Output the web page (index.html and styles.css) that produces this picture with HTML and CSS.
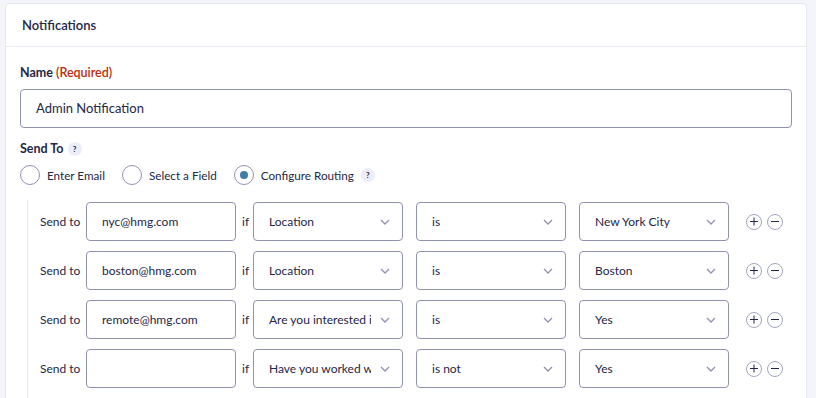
FILE: index.html
```html
<!DOCTYPE html>
<html lang="en">
<head>
    <meta charset="UTF-8">
    <title>Notifications</title>
    <link rel="stylesheet" href="styles.css">
</head>
<body>
    <main class="panel">
        <header class="panel-head">Notifications</header>
        <section class="panel-body">
            <label class="field-label">Name <span class="required">(Required)</span></label>
            <div class="text-box wide">Admin Notification</div>

            <div class="field-label send-label">Send To<span class="help">?</span></div>
            <div class="radios">
                <span class="radio"></span><span class="radio-text">Enter Email</span>
                <span class="radio"></span><span class="radio-text">Select a Field</span>
                <span class="radio checked"></span><span class="radio-text">Configure Routing</span>
                <span class="help">?</span>
            </div>

            <div class="routing">
                <div class="route">
                    <span class="route-label">Send to</span>
                    <div class="text-box email">nyc@hmg.com</div>
                    <span class="route-if">if</span>
                    <div class="select"><span>Location</span></div>
                    <div class="select"><span>is</span></div>
                    <div class="select"><span>New York City</span></div>
                    <span class="route-btns"><span class="btn-add"></span><span class="btn-del"></span></span>
                </div>
                <div class="route">
                    <span class="route-label">Send to</span>
                    <div class="text-box email">boston@hmg.com</div>
                    <span class="route-if">if</span>
                    <div class="select"><span>Location</span></div>
                    <div class="select"><span>is</span></div>
                    <div class="select"><span>Boston</span></div>
                    <span class="route-btns"><span class="btn-add"></span><span class="btn-del"></span></span>
                </div>
                <div class="route">
                    <span class="route-label">Send to</span>
                    <div class="text-box email">remote@hmg.com</div>
                    <span class="route-if">if</span>
                    <div class="select"><span>Are you interested in working remotely?</span></div>
                    <div class="select"><span>is</span></div>
                    <div class="select"><span>Yes</span></div>
                    <span class="route-btns"><span class="btn-add"></span><span class="btn-del"></span></span>
                </div>
                <div class="route">
                    <span class="route-label">Send to</span>
                    <div class="text-box email"></div>
                    <span class="route-if">if</span>
                    <div class="select"><span>Have you worked with us before?</span></div>
                    <div class="select"><span>is not</span></div>
                    <div class="select"><span>Yes</span></div>
                    <span class="route-btns"><span class="btn-add"></span><span class="btn-del"></span></span>
                </div>
            </div>
        </section>
    </main>
</body>
</html>
```

FILE: styles.css
```css
body {
    margin: 0;
    padding: 3px 9px 0 5px;
    background: #f4f5fb;
    font-family: Lato, "Liberation Sans", sans-serif;
    font-size: 13px;
    color: #242748;
}

.panel {
    background: #fff;
    border: 1px solid #e4e6f0;
    border-radius: 4px;
    height: 420px;
}

.panel-head {
    height: 42px;
    line-height: 42px;
    padding-left: 16px;
    border-bottom: 1px solid #ebecf3;
    font-weight: 600;
}

.panel-body {
    padding: 17px 14px 0 14px;
}

.field-label {
    display: block;
    font-size: 12.5px;
    font-weight: 700;
    line-height: 18px;
}

.required {
    color: #c02b0a;
    font-weight: 600;
}

.text-box {
    box-sizing: border-box;
    height: 39px;
    line-height: 37px;
    border: 1px solid #9092b2;
    border-radius: 4px;
    padding-left: 15px;
    background: #fff;
    white-space: nowrap;
    overflow: hidden;
}

.wide {
    margin-top: 7px;
}

.send-label {
    margin-top: 12px;
    display: flex;
    align-items: center;
    gap: 4px;
}

.help {
    display: inline-flex;
    align-items: center;
    justify-content: center;
    width: 14px;
    height: 14px;
    border-radius: 50%;
    background: #ecedf8;
    font-size: 8px;
    font-weight: 700;
    color: #242748;
}

.radios {
    display: flex;
    align-items: center;
    margin-top: 6px;
    height: 22px;
    font-size: 11.7px;
}

.radio {
    box-sizing: border-box;
    width: 20px;
    height: 20px;
    border: 1px solid #9092b2;
    border-radius: 50%;
    margin-right: 7px;
    display: flex;
    align-items: center;
    justify-content: center;
}

.radio.checked::after {
    content: "";
    width: 8px;
    height: 8px;
    border-radius: 50%;
    background: #3e7da6;
}

.radio-text {
    margin-right: 17px;
}

.radios .help {
    margin-left: -10px;
}

.routing {
    margin: 14px 0 0 7px;
    border-left: 1px solid #e4e6f0;
    padding: 2px 0 2px 12px;
    font-size: 12px;
}

.route {
    display: flex;
    align-items: center;
    height: 39px;
    margin-bottom: 10px;
}

.route > * {
    flex-shrink: 0;
}

.route-label {
    width: 46px;
}

.email {
    width: 150px;
}

.route-if {
    width: 11px;
    padding-left: 6px;
}

.select {
    box-sizing: border-box;
    width: 150px;
    height: 39px;
    line-height: 37px;
    margin-right: 13px;
    border: 1px solid #9092b2;
    border-radius: 4px;
    padding: 0 31px 0 15px;
    background: #fff url("data:image/svg+xml,%3Csvg xmlns='http://www.w3.org/2000/svg' width='10' height='6' viewBox='0 0 10 6'%3E%3Cpath d='M1 1l4 4 4-4' fill='none' stroke='%239092b2' stroke-width='1.3'/%3E%3C/svg%3E") no-repeat right 12px center;
}

.select span {
    display: block;
    white-space: nowrap;
    overflow: hidden;
}

.route-btns {
    display: flex;
    gap: 5px;
    margin-left: 4px;
}

.btn-add,
.btn-del {
    position: relative;
    box-sizing: border-box;
    width: 16px;
    height: 16px;
    border: 1px solid #a4a6c2;
    border-radius: 50%;
}

.btn-add::before,
.btn-del::before,
.btn-add::after {
    content: "";
    position: absolute;
    left: 3px;
    top: 6.5px;
    width: 8px;
    height: 1px;
    background: #242748;
}

.btn-add::after {
    transform: rotate(90deg);
}
```
